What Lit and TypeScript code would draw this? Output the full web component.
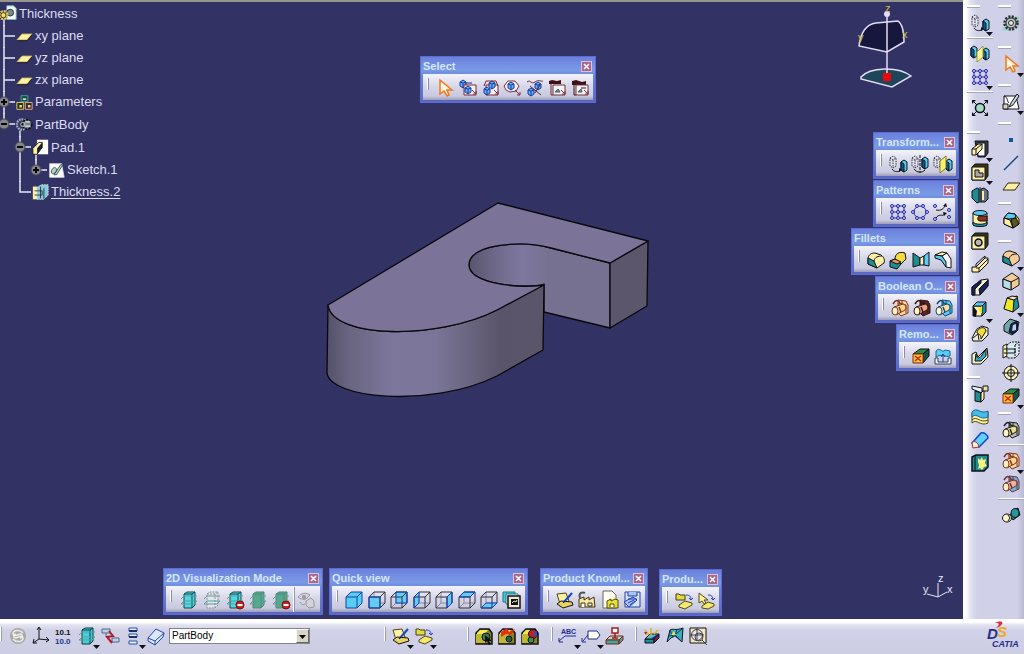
import { LitElement, html, svg, css, nothing } from "lit";
import { customElement, property } from "lit/decorators.js";
import { classMap } from "lit/directives/class-map.js";
import { styleMap } from "lit/directives/style-map.js";

const K = "#101018";
const TEAL = "#1f8c90";
const CYAN = "#58ccf2";
const PALE = "#fff0a4";
const GOLD = "#f4dc3c";
const NAVY = "#1c2c94";

const box = (x: number, y: number, w: number, h: number, d: number, front: string, top: string, side: string, line = K) => svg`
  <path d="M${x} ${y + d}h${w}v${h}h${-w}z" fill=${front} stroke=${line}/>
  <path d="M${x} ${y + d}l${d} ${-d}h${w}l${-d} ${d}z" fill=${top} stroke=${line}/>
  <path d="M${x + w} ${y + d}l${d} ${-d}v${h}l${-d} ${d}z" fill=${side} stroke=${line}/>`;

const cubeFaces: Record<string, string> = {
  front: "M2 7h11v11h-11z",
  back: "M7 2h11v11h-11z",
  left: "M2 7l5-5v11l-5 5z",
  right: "M13 7l5-5v11l-5 5z",
  top: "M2 7l5-5h11l-5 5z",
  bottom: "M2 18l5-5h11l-5 5z",
};
const cube = (face: string) => svg`
  <path d="M7 2v11h11M7 13l-5 5" stroke="#8a8a98" fill="none"/>
  <path d=${cubeFaces[face]} fill=${CYAN} fill-opacity=".9"/>
  <path d="M2 7h11v11h-11zM2 7l5-5h11l-5 5M18 2v11l-5 5" fill="none" stroke="#30303c"/>
  <path d=${cubeFaces[face]} fill="none" stroke="#1040c0"/>`;

const ghost = (x: number) => svg`
  <path d="M${x} 4l3-2 3 2v8l-3 2-3-2zM${x} 4l3 2 3-2M${x + 3} 6v8" fill="#e4e4f0" stroke="#30303c" stroke-dasharray="1.5 1"/>`;
const prism = (x: number, y: number) => svg`
  <path d="M${x} ${y}l3-2 3 2v8l-3 2-3-2z" fill=${CYAN} stroke=${K}/>
  <path d="M${x} ${y}l3 2v8l-3-2z" fill="#105890" stroke=${K}/>`;
const dots = (pts: number[][]) => pts.map(([x, y]) => svg`<circle cx=${x} cy=${y} r="1.5" fill="#c8d0ff" stroke="#2424a0"/>`);
const stop = svg`<circle cx="15" cy="15" r="4" fill="#d02020" stroke="#701010"/><path d="M12.500 15h5" stroke="#fff" stroke-width="2"/>`;
const slab = (fill: string, line: string, dash = "") => svg`
  <path d="M5 4l3-2h8v13l-3 3h-8z" fill=${fill} stroke=${line} stroke-dasharray=${dash}/>
  <path d="M5 4h8l3-2M13 4v14" fill="none" stroke=${line} stroke-dasharray=${dash}/>
  <path d="M2 14l3-3h13l-3 3zM2 9l3-3h13" fill="none" stroke="#58a098"/>`;
const bodies = (a: string, b: string, line: string) => svg`
  <path d="M8 2l8 1 2 4v8l-7 3-3-3z" fill=${b} stroke=${line}/>
  <path d="M9 5l7 2v8M9 5v9M12 3v4" fill="none" stroke=${line}/>
  <path d="M4 9l9-3a3 3.500 0 0 1 2 6l-9 5z" fill=${a} stroke=${line}/>
  <ellipse cx="5" cy="13" rx="3" ry="4" fill="#fff4c8" stroke=${line}/>
  <path d="M3 6c3-5 5-4 7-1M9 9l2 5" fill="none" stroke=${line} stroke-width="1.500"/>`;
const camera = svg`
  <path d="M2 7l4-4h9l3 4v11h-16z" fill="#8a8420" stroke=${K} stroke-width="1.500"/>
  <path d="M3 7l3-3h8l-3 4h-8z" fill="#f8e850"/><path d="M2 8h10v9h-10z" fill="#c0b830"/>`;
const book = svg`
  <path d="M2 4l9-1 3 8-9 3z" fill=${PALE} stroke="#504810"/>
  <path d="M2 14l4-3 11 1 1 3-10 3z" fill="#e8d460" stroke=${K}/>
  <path d="M9 12l8-9" stroke="#1848c0" stroke-width="2"/><path d="M8 13l2-2" stroke=${K}/>`;
const catalog = svg`
  <path d="M2 3h3l1 1h5v5h-9z" fill="#e0dc40" stroke="#403c10"/>
  <path d="M12 4c4 0 5 2 5 4M15 7l2 2 2-2" fill="none" stroke="#2040c0"/>
  <path d="M5 14l6-4 7 2v2l-7 4-6-2z" fill="#f4e870" stroke="#504810"/>`;
const frame = (line: string) => svg`
  <path d="M6 7h12v10h-12z" fill="#f4f0f8" stroke=${line}/>
  <path d="M14 12l4 4M18 13v3h-3" stroke="#803040" fill="none"/>`;
const blueBox = (x: number, y: number) => svg`<path d="M${x} ${y + 2}l3-2 3 2v4l-3 2-3-2zM${x} ${y + 2}l3 1 3-1M${x + 3} ${y + 3}v5" fill="#60b0f4" stroke="#1838a0"/>`;
const gear = svg`<circle cx="10" cy="10" r="6.500" fill="#b4b8b8" stroke="#283030" stroke-width="2.500" stroke-dasharray="2 1.400"/><circle cx="10" cy="10" r="5" fill="#c0ccc8" stroke="#283030"/><circle cx="10" cy="10" r="2.500" fill="#e0e4e4" stroke="#283030"/>`;
const pointer = svg`<path d="M5 2v14l4-3 3 5 2-1-2-5h5z" fill="#fff4e0" stroke="#f07818" stroke-width="1.500"/>`;
const padShape = svg`
  <path d="M5 2h13v12l-3 4h-7z" fill="#383c48" stroke=${K}/><path d="M7 4h8v13h-7z" fill="#fff" stroke=${K}/>
  <path d="M2 10l6-5h4v5l-6 6h-4z" fill=${PALE} stroke=${K}/><path d="M2 10h4v6M6 10l6-5" fill="none" stroke=${K}/>`;
const fillet = (top: string, side: string) => svg`
  <path d="M2 8c1-4 4-5 7-5l6 2c3 2 4 5 3 8l-7 5-9-4z" fill=${top} stroke=${K}/>
  <path d="M2 8l6 3 3 7-9-4z" fill=${side} stroke=${K}/><path d="M8 11c1-4 4-5 8-5" fill="none" stroke=${K}/>`;
const childStub = svg`<path d="M4.700 17v8" stroke="#e8e8f4" stroke-width="1.700"/>`;

const ICONS: Record<string, unknown> = {
  pointer,
  gear: svg`<path d="M1 18l4-11 13-4v9l-6 6z" fill="#90d8c8" opacity=".7"/>${gear}`,
  trapSelect: svg`${blueBox(2, 2)}${frame("#802830")}<path d="M7 5h7" stroke=${NAVY}/>${blueBox(7, 8)}`,
  trapIntersect: svg`${frame("#802830")}${blueBox(4, 9)}${blueBox(9, 3)}<path d="M4 8l2-5h10l2 5" fill="none" stroke="#802830"/>`,
  trapPolygon: svg`<path d="M2 8l4-5h7l4 5-3 5-6 1-4-2z" fill="#f0f0ff" stroke="#803040"/>${blueBox(6, 4)}<path d="M13 12l5 5M18 14v3h-3" fill="none" stroke="#803040"/>`,
  trapPaint: svg`${blueBox(3, 10)}${blueBox(10, 4)}<path d="M2 4c4-3 4 3 8 0s6 0 8-1M5 8l11 9M15 7l-5 8" fill="none" stroke="#602838"/>`,
  trapOutside: svg`<path d="M2 3l3-1 5 1 4-1v4h-12z" fill="#401018"/>${frame("#703038")}<path d="M4 6v11h2" fill="none" stroke="#703038"/><path d="M8 14l3-3 2 3z" fill="#80a890" stroke="#405848"/>`,
  trapOutsideInt: svg`<path d="M2 3l4-1 6 2 4-1v4h-14z" fill="#401018"/>${frame("#703038")}<path d="M4 7v10h2M11 10h5" fill="none" stroke="#401018"/><path d="M8 14l3-3 1 3z" fill="#80a890" stroke="#405848"/>`,
  translate: svg`${ghost(2)}<path d="M4 15c2 3 5 3 8 2" fill="none" stroke=${K}/><path d="M11 14l3 2-3 2z" fill=${K}/>${prism(13, 8)}`,
  symmetry: svg`${ghost(2)}${prism(12, 5)}<path d="M10 1v18" stroke=${K} stroke-dasharray="3 1"/><path d="M4 15c3 4 8 4 11 1" fill="none" stroke=${K}/>`,
  mirrorGhost: svg`${ghost(1)}${prism(13, 7)}<path d="M7 7l6-5v12l-6 5z" fill="#f8f070" stroke="#807820"/>`,
  mirror: svg`${prism(1, 4)}${prism(13, 6)}<path d="M7 8l6-6v11l-6 5z" fill="#f8f498" stroke="#a09830"/>`,
  pattern: svg`<path d="M4 4h12M4 10h12M4 16h12M4 4v12M10 4v12M16 4v12" stroke="#2828a8"/>${dots([[4, 4], [10, 4], [16, 4], [4, 10], [10, 10], [16, 10], [4, 16], [10, 16], [16, 16]])}`,
  circular: svg`<circle cx="10" cy="10" r="6" fill="none" stroke="#2828a8"/>${dots([[7, 4], [13, 4], [3, 10], [17, 10], [7, 16], [13, 16]])}`,
  userPattern: svg`<path d="M4 8c5 1 8-1 9-5M4 16c3-5 6-1 9-4" fill="none" stroke=${K}/><path d="M11 4l3-3 1 4zM11 10l4 1-3 3z" fill=${K}/>${dots([[3, 4], [3, 17], [17, 8], [17, 15]])}`,
  scale: svg`<path d="M3 3l14 14M17 3l-14 14" stroke=${K}/><path d="M2 2h4l-4 4zM18 2h-4l4 4zM2 18h4l-4-4zM18 18h-4l4-4z" fill=${K}/><circle cx="10" cy="10" r="4.500" fill="#a8dcc0" stroke=${K} stroke-width="1.500"/>`,
  filletEdge: fillet(PALE, TEAL),
  filletTan: fillet("#f4cc98", TEAL),
  filletSolid: svg`<path d="M3 8l4-5 7 1 4 5v5l-6 4-9-4z" fill=${GOLD} stroke=${K}/><path d="M7 3l7 1 1 4-7 1-5-1z" fill=${CYAN} stroke=${K}/><path d="M3 8l6 2 3 8-9-4z" fill="#fff0a0" stroke=${K}/><path d="M10 9l5-1 3 6-6 4z" fill="#585820" stroke=${K}/>`,
  filletFace: svg`<path d="M2 11l5-2 6 2v3l-4 5-7-2z" fill=${TEAL} stroke=${K}/><path d="M7 9c0-5 4-8 10-6l1 6-5 5z" fill=${GOLD} stroke=${K}/><path d="M2 11l5-2 6 3-4 2z" fill="#e89858" stroke=${K}/>`,
  filletTri: svg`<path d="M2 3l7 5v7l-7 2z" fill=${TEAL} stroke=${K}/><path d="M9 8l4-2v9l-4 0z" fill="#fff0b0" stroke=${K}/><path d="M13 6l5-4v14l-5-1z" fill=${CYAN} stroke=${K}/>`,
  chamferEdge: svg`<path d="M2 5l7-3 5 1-5 3z" fill=${PALE} stroke=${K}/><path d="M9 6l5-3 4 6v9l-5-1z" fill="#f8f8f8" stroke=${K}/><path d="M2 5l7 1 4 6v5l-5-7-6-2z" fill=${CYAN} stroke=${K}/>`,
  chamfer: svg`<path d="M2 8l9-6 7 5v7l-8 5-8-3z" fill="#f4cc98" stroke=${K}/><path d="M2 8l8 3 8-4M10 11v8" fill="none" stroke=${K}/><path d="M2 8l8 3v8l-8-3z" fill="#b8dce8" stroke=${K}/>`,
  draft: svg`<path d="M3 14l4-10 9-2 2 11-6 5z" fill=${TEAL} stroke=${K}/><path d="M6 4l7 2-1 12-9-3z" fill="#f0e820" stroke=${K}/><path d="M6 4l5-2 6 1-4 3z" fill="#f4e8b0" stroke=${K}/>`,
  shell: svg`<path d="M3 8l6-6 9 3-2 9-5 4-8-4z" fill="#70a8a8" stroke=${K}/><path d="M8 15l2-8 6-3 1 9-5 4z" fill="#182050" stroke=${K}/><path d="M11 14l1-6 3-1v6z" fill="#b8d4e8"/>`,
  thickness: svg`<path d="M2 6l4-2v12l-4 2z" fill=${PALE} stroke=${K}/><path d="M6 5l4-3h8v12l-4 4h-8z" fill="#d8e8f0" stroke=${K} stroke-dasharray="2 1"/><path d="M3 9h11v4h-11" fill="none" stroke=${K}/><path d="M14 5v13M14 5l4-3" stroke=${K} stroke-dasharray="2 1"/>`,
  thread: svg`<circle cx="10" cy="10" r="7" fill="#f8f0b8" stroke=${K}/><circle cx="10" cy="10" r="3.500" fill="none" stroke=${K}/><path d="M10 1v18M1 10h18" stroke=${K}/>`,
  removeFace: svg`<path d="M2 8l7-5h9l-6 5z" fill="#2a9048" stroke=${K}/><path d="M12 8l6-5v7l-6 7z" fill="#105848" stroke=${K}/><path d="M2 8h10v9h-10z" fill="#f0c830" stroke="#902010"/><path d="M4 10l6 5M10 10l-6 5" stroke="#d02020" stroke-width="1.500"/>`,
  replaceFace: svg`<path d="M3 5c4-5 6 3 9-1l5 1v5c-4 2-8-3-14 1z" fill=${CYAN} stroke="#186898"/><path d="M2 12h3v4h10v-4h3v6h-16z" fill="#f0f0f8" stroke="#284060"/><path d="M10 16v-7M8 11l2-3 2 3" stroke="#2040a0" fill="none"/>`,
  assemble: bodies("#ffd890", "#f4d8a0", "#80301c"),
  addBody: bodies("#e8a088", "#502828", "#381410"),
  booleanAdd: bodies("#ffe0a0", CYAN, "#104878"),
  insertBody: bodies("#e8e090", "#b0b8b0", "#202020"),
  trim: bodies("#f0b498", "#68b8e0", "#703038"),
  lump: svg`<path d="M9 11l3-6 5-2 2 7-7 5z" fill=${TEAL} stroke=${K}/><ellipse cx="6" cy="13" rx="4.500" ry="4" fill="#fff8c8" stroke=${K}/><ellipse cx="14" cy="8" rx="4" ry="4.500" fill="#2498a0" stroke=${K}/><path d="M7 10l2 3-2 3" fill="none" stroke=${K}/>`,
  sketch: svg`<path d="M3 4h12l3 13h-15z" fill="#fff" stroke=${K}/><path d="M16 2l-6 9-2 4 4-2 6-9z" fill="#c8e0d8" stroke=${K}/><path d="M2 12h5v5h-5z" fill="#d8d4c0" stroke=${K}/><path d="M3 4c4 1 3 6 5 7" fill="none" stroke=${K}/>`,
  sketchTree: svg`<path d="M2 2h14l3 16h-17z" fill="#fff" stroke="#d8d8e8"/><path d="M4 12c0-6 6-7 6-3s-5 7-6 3M7 15l8-12 2 1-7 11z" fill="#b8d4c8" stroke="#304840"/>`,
  point: svg`<path d="M8 8h4v4h-4z" fill="#105890"/>`,
  line: svg`<path d="M3 17l14-14" stroke="#104878" stroke-width="1.500"/>`,
  plane: svg`<path d="M2 14l5-7h12l-5 7z" fill=${PALE} stroke="#302c10"/>`,
  pad: padShape,
  pocket: svg`<path d="M2 5l3-3h13v12l-3 4h-13z" fill="#383818" stroke=${K}/><path d="M2 5h13v13h-13z" fill=${PALE} stroke=${K}/><path d="M5 8h4v3h4v4h-8z" fill="#a8a8a0" stroke=${K}/>`,
  shaft: svg`<path d="M2 6l5-3 2 1v13l-2 1-5-5z" fill=${TEAL} stroke=${K}/><path d="M11 4l3-1 4 3v8l-3 3h-4z" fill="#607088" stroke=${K}/><path d="M10 2v16" stroke=${K}/><path d="M13 6v9" stroke=${PALE} stroke-width="2"/>`,
  groove: svg`<path d="M3 5v11c2 3 12 3 14 0v-11z" fill=${PALE} stroke=${K}/><ellipse cx="10" cy="5" rx="7" ry="2.500" fill=${CYAN} stroke=${K}/><path d="M17 8h-7c-3 0-3 5 0 5h7z" fill="#903018" stroke=${K}/><path d="M3 14c2 3 12 3 14 0v3c-2 2-12 2-14 0z" fill="#2498a8" stroke=${K}/>`,
  hole: svg`<path d="M2 5l3-3h13v12l-3 4h-13z" fill="#383818" stroke=${K}/><path d="M2 5h13v13h-13z" fill=${PALE} stroke=${K}/><circle cx="8.500" cy="11.500" r="3.500" fill="#b8b8b0" stroke=${K} stroke-width="1.500"/>`,
  rib: svg`<path d="M2 13h4l9-9h3v5l-9 9h-7z" fill=${PALE} stroke=${K}/><path d="M6 13v-3l9-8v2M9 18v-4h-3M9 14l9-9" fill="none" stroke=${K}/>`,
  slot: svg`<path d="M2 10l9-7 7-1v7l-8 9h-8z" fill="#f4f0d0" stroke=${K}/><path d="M2 10l9-7v3l-6 6v6h-3zM9 12l9-9v6l-8 9z" fill="#182458" stroke=${K}/>`,
  stiffener: svg`${box(3, 2, 9, 10, 4, PALE, CYAN, TEAL)}<path d="M3 6l4 5-1 6-3-1z" fill="#101010"/><path d="M8 9l4-3v8z" fill=${GOLD}/>`,
  multiPad: svg`<path d="M2 15l5-9 5-3 6 2v7l-6 6h-9z" fill="#f4f0d0" stroke=${K}/><path d="M7 10c0-5 8-8 9-2l-5 8c0-4-2-5-4-6z" fill=${GOLD} stroke=${K}/><path d="M3 15l5-4 1 6" fill="none" stroke=${K}/>`,
  multiPocket: svg`<path d="M2 8l4-2 2 5 9-9 1 9-7 7h-9z" fill="#f4f0c0" stroke=${K}/><path d="M6 8c0 5 4 5 6 1l4-6v7l-5 5h-6z" fill="#38a8c8" stroke=${K}/>`,
  split: svg`<path d="M2 2l10 2v5l-10-4z" fill="#e8f4fc" stroke=${K}/><path d="M5 7l6 2v9l-6-1z" fill=${TEAL} stroke=${K}/><path d="M11 9l3-3v9l-3 3z" fill=${PALE} stroke=${K}/><path d="M13 2h5v5h-5z" fill="#e8e4a0" stroke=${K}/>`,
  thickSurface: svg`<path d="M2 6c5-6 8 3 16-1v11c-8 4-11-5-16 0z" fill=${PALE} stroke="#504810"/><path d="M2 5c5-6 8 3 16-1v6c-8 4-11-5-16 0z" fill="#48bce8" stroke="#186898"/><path d="M2 13c5-5 8 4 16 0" fill="none" stroke="#504810"/>`,
  closeSurface: svg`<path d="M2 13l9-10c3-1 7 2 7 5l-9 9z" fill="#60d0fc" stroke="#1048c8" stroke-width="1.500"/><path d="M2 13c2-3 6-1 7 4l-6 1z" fill="#fff0e0" stroke="#a03028"/>`,
  sewSurface: svg`<path d="M2 4l4-2h12v12l-4 4h-12z" fill=${TEAL} stroke=${K} stroke-width="1.500"/><path d="M8 5l2 2 2-3 1 3 3-1-1 4 2 3-3 1-2 3-2-2-2 1 1-4-1-3z" fill="#f8f080"/><path d="M5 3v15" stroke=${K}/>`,
  vizShade: slab("#50d8e8", "#104848"),
  vizGhost: slab("#e4e4f0", "#909098", "2 1"),
  vizStop: svg`${slab("#50d8e8", "#104848")}${stop}`,
  vizGreen: slab("#58a890", "#508878"),
  vizGreenStop: svg`${slab("#58a890", "#508878")}${stop}`,
  hide: svg`<path d="M2 7c3-4 8-5 12-2l-4 4c-3 1-6 0-8-2zM10 11l5-3 3 3v6l-5 1-3-3z" fill="#d4d4d8" stroke="#98989c"/><circle cx="8" cy="7" r="2" fill="#98989c"/><path d="M4 12c2 3 3 3 5 2" stroke="#98989c" fill="none"/>`,
  cubeAll: svg`<path d="M2 7l5-5h11v11l-5 5h-11z" fill=${CYAN} stroke="#1040a8"/><path d="M2 7h11v11M13 7l5-5" fill="none" stroke="#1040a8"/>`,
  cubeFront: cube("front"),
  cubeBack: cube("back"),
  cubeLeft: cube("left"),
  cubeRight: cube("right"),
  cubeTop: cube("top"),
  cubeBottom: cube("bottom"),
  namedViews: svg`<path d="M1 2h12v10h-12z" fill="#48c8d8" stroke="#187888"/><path d="M4 4h12v10h-12z" fill="#fff" stroke="#187888"/><path d="M6 6h12v12h-12z" fill="#f0e8c8" stroke=${K} stroke-width="1.500"/><path d="M9 9h7v6h-7z" fill=${K}/><path d="M10 13l2-2 2 1 1-2" fill="none" stroke="#f0e8c8"/>`,
  book,
  catalog,
  factory: svg`<path d="M2 9l5-2v3l5-3v3l5-3 1 10h-16z" fill="#f8e8a0" stroke="#403010"/><path d="M4 17v-4h4v4M11 13h4v3h-4z" fill="#fff" stroke="#403010"/><path d="M3 8c-2-6 3-6 5-5" fill="none" stroke="#485050" stroke-width="2"/>`,
  factoryPage: svg`<path d="M3 1h9l4 4v13h-13z" fill="#fffef0" stroke="#686850"/><path d="M7 11l4-2v2l4-2 3 1v8h-11z" fill="#e8e030" stroke="#504c10"/><path d="M10 17v-3h4v3" fill="#fff" stroke="#504c10"/>`,
  rules: svg`<path d="M3 2h15v15h-15z" fill="#d8e4ff" stroke="#2040b0"/><path d="M6 2v4h9v-4M6 9h9M2 12l9-5 4 3-8 7z" fill="#a8c4f8" stroke="#2040b0"/><path d="M6 13l6-3M8 15l5-4" stroke="#2040b0"/>`,
  catalogPick: svg`<path d="M3 2v10l3-2 2 3 2-1-2-3h4z" fill="#fff0a0" stroke="#504c10"/><path d="M12 4c4 0 5 2 5 5M15 7l2 2 2-2" fill="none" stroke="#2040c0"/><path d="M6 15l6-4 6 2v2l-6 3-6-1z" fill="#f4e870" stroke="#504810"/>`,
  swirl: svg`<circle cx="10" cy="10" r="8" fill="#a8a8a4"/><path d="M15 7c-3-4-10-3-10 1 0 3 5 1 7 0 3 0 3 4 0 4M5 13c3 4 10 3 10-1 0-3-5-1-7 0-3 0-3-4 0-4" fill="none" stroke="#ececea" stroke-width="1.500"/>`,
  axis: svg`<path d="M8 13v-11M8 13l10 1M8 13l-6 4M6 4l2-3 2 3M15 11l3 3-3 2M3 13l-1 4 4 0" fill="none" stroke=${K}/>`,
  tolerance: svg`<text x="1" y="9" class="glyph" fill=${K}>10.1</text><text x="1" y="18" class="glyph" fill="#183890">10.0</text>`,
  shade: slab("#40d0e0", "#103838"),
  filter: svg`<path d="M2 3h8v4h-8z" fill="#b8d0e8" stroke="#506888"/><path d="M6 7v3M12 12h7v4h-7z" fill="#b8d0e8" stroke="#506888"/><path d="M9 5l4 5-6 1 5 6" fill="none" stroke="#b01828" stroke-width="2"/>`,
  layers: svg`<path d="M6 2h8v3h-8zM6 8h8v3h-8zM6 15h8v3h-8z" fill="#e8f0ff" stroke="#2850a0"/><path d="M6 5h8M6 11h8" stroke="#183070" stroke-width="2"/>`,
  bodyPad: svg`<path d="M2 12l8-9 8 4-1 4-8 8-7-4z" fill="#dce8ff" stroke="#2048a8"/><path d="M2 12l7 3 9-8M9 15v4" fill="none" stroke="#2048a8"/>`,
  cameraPick: svg`${camera}<circle cx="12" cy="11" r="4" fill="#407850" stroke=${K}/><path d="M11 9v8l2-2 2 4 2-1-2-3h3z" fill=${K}/>`,
  cameraEdit: svg`${camera}<path d="M4 6l6-4 2 4 6-3-4 6-5-1-5 3z" fill="#e03018"/><circle cx="12" cy="13" r="3" fill="#206838" stroke=${K}/>`,
  cameraColor: svg`${camera}<circle cx="13" cy="8" r="4.500" fill="#c02028" stroke=${K}/><path d="M13 8l4-3v6z" fill="#2850c0"/><circle cx="11" cy="14" r="3" fill="#389048" stroke=${K}/>`,
  textNote: svg`<text x="3" y="8" class="glyph small" fill=${NAVY}>ABC</text><path d="M18 10h-11l-6 5M1 12v4h4" fill="none" stroke=${NAVY}/>`,
  flagNote: svg`<path d="M7 5h9l3 4-3 4h-9z" fill="#fffef0" stroke=${NAVY}/><path d="M7 9l-5 6M1 12v4h4" fill="none" stroke=${NAVY}/>`,
  annotation: svg`<path d="M2 14l4-4h13l-4 4z" fill="#a8e0c8" stroke="#802018"/><path d="M2 14h13v4h-13zM15 14l4-4v4l-4 4z" fill="#40a898" stroke="#802018"/><path d="M8 2h6v5h-6zM11 7v5M8 12h6" fill="#fff" stroke="#a02020" stroke-width="1.500"/>`,
  draftAnalysis: svg`${box(3, 8, 9, 4, 5, "#2090a0", "#58c0c0", "#802030")}<path d="M3 4l4 5M9 2v7M16 4l-4 4" stroke="#e0b020" stroke-width="1.500"/><path d="M2 6l3 0-1 3z" fill="#c02020"/><path d="M10 13l6-4" stroke="#182878" stroke-width="2"/>`,
  curvature: svg`<path d="M2 16l3-12c3-2 5 1 13-2l-1 14-6-6c-4 0-6 3-9 6z" fill="#38b0b8" stroke=${K}/><path d="M5 4l3 8M12 3l-2 7 7 6M4 10l7-2 6-5" fill="none" stroke="#183878"/><path d="M6 9l3-4 2 4z" fill="#e8e040"/>`,
  tap: svg`<path d="M2 2h16v15h-16z" fill="#f4e8c0" stroke=${K}/><circle cx="9" cy="9" r="5.500" fill="#e8e4e8" stroke="#404048"/><circle cx="11" cy="11" r="4" fill="none" stroke="#404048"/><path d="M9 2v12M2 9h14M14 14l5 5" stroke="#404048"/>`,
  partDoc: svg`${childStub}<path d="M8 1h8l3 3v13h-11z" fill="#f4fffc" stroke="#80b8b8"/><circle cx="12" cy="9" r="4" fill="#78888c" stroke="#202828"/><circle cx="4" cy="12" r="4.500" fill="none" stroke="#e8cc60" stroke-width="3" stroke-dasharray="2.500 1"/><circle cx="4" cy="12" r="3" fill="#f8e070" stroke="#383010"/>`,
  treePlane: svg`<path d="M1 14l6-7h12l-6 7z" fill=${PALE} stroke="#b8a850"/><path d="M1 15h12l6-7" fill="none" stroke="#101820"/>`,
  parameters: svg`<path d="M6 2h8v7h-8z" fill="#104848" stroke="#40b8a8"/><path d="M1 10h8v8h-8z" fill="#303010" stroke="#e8e060"/><path d="M11 10h8v8h-8z" fill="#402820" stroke="#f0b8a0"/><path d="M8 5h4v2h-4zM4 13h3v3h-3zM14 13h3v3h-3z" fill="#d8d8a0"/>`,
  partBody: svg`${childStub}<circle cx="7" cy="10" r="6" fill="#383858" stroke="#a8b4c8" stroke-width="2.500" stroke-dasharray="2 1"/><circle cx="13" cy="10" r="5.500" fill="#788088" stroke="#101418" stroke-width="2" stroke-dasharray="3 1"/><path d="M11 7h6M11 12h6" stroke="#e0e4ec" stroke-width="1.500"/><circle cx="8" cy="10" r="2.500" fill="none" stroke="#c8d0dc"/>`,
  padTree: svg`${childStub}<path d="M6 1h13v17h-14z" fill="#fff"/><path d="M1 11l7-7h4v6l-6 8h-5z" fill=${PALE} stroke=${K}/><path d="M6 11l6-7v6l-6 8z" fill="#181c28"/>`,
  thickTree: svg`<path d="M1 3h5v15h-5z" fill=${PALE}/><path d="M6 4l5-3h8v12l-5 5h-8z" fill="#88c8d8" stroke="#e8f0f4" stroke-dasharray="2 1"/><path d="M3 8h9v5h-9M14 5v13M10 3v14" fill="none" stroke="#203040"/>`,
};

type Tool = { icon: string; label: string; menu?: boolean } | "line";
const t = (icon: string, label: string, menu = false): Tool => ({ icon, label, menu });

@customElement("tool-icon")
class ToolIcon extends LitElement {
  @property() name = "";
  static styles = css`
    :host { display: block; width: 20px; height: 20px; }
    .art { display: block; width: 100%; height: 100%; overflow: visible; }
    .glyph { font: bold 8px "Liberation Sans", Arial, sans-serif; }
    .small { font-size: 7px; }
  `;
  render() {
    return html`<svg class="art" viewBox="0 0 20 20" fill="none" aria-hidden="true">${ICONS[this.name]}</svg>`;
  }
}

@customElement("tool-button")
class ToolButton extends LitElement {
  @property() icon = "";
  @property() label = "";
  @property({ type: Boolean }) menu = false;
  static styles = css`
    :host { display: block; }
    .button {
      position: relative; display: grid; place-items: center; width: 22px; height: 22px;
      margin: 0 auto; padding: 0; border: 0; background: none;
    }
    .arrow { position: absolute; right: -2px; bottom: -2px; width: 7px; height: 4px; }
  `;
  render() {
    return html`<button class="button" type="button" aria-label=${this.label} title=${this.label}>
      <tool-icon name=${this.icon}></tool-icon>
      ${this.menu ? html`<svg class="arrow" viewBox="0 0 7 4" aria-hidden="true"><path d="M0 0h7L3.500 4z" fill="#101018"/></svg>` : nothing}
    </button>`;
  }
}

const toolButton = (tool: Tool) =>
  tool === "line"
    ? html`<span class="rule" role="separator"></span>`
    : html`<tool-button class="tool" icon=${tool.icon} label=${tool.label} ?menu=${tool.menu}></tool-button>`;

@customElement("tool-window")
class ToolWindow extends LitElement {
  @property() heading = "";
  @property({ attribute: false }) tools: Tool[] = [];
  static styles = css`
    :host { display: block; }
    .window {
      box-sizing: border-box; padding: 2px 3px 3px; border-radius: 1px;
      background: linear-gradient(#6a7edc, #7a9ae6 30%, #6c86dc 42%, #5866c4);
      box-shadow: inset 0 0 0 1px #5c6cd0;
      font-family: "Liberation Sans", Arial, sans-serif;
    }
    .bar { display: flex; align-items: center; justify-content: space-between; height: 16px; }
    .title { margin: 0; font-size: 11px; line-height: 16px; font-weight: bold; color: #d4e6fc; white-space: nowrap; }
    .close { display: grid; place-items: center; width: 11px; height: 11px; margin-right: 1px; padding: 0; border: 1px solid #e0c0dc; background: #a8688c; }
    .cross { display: block; width: 7px; height: 7px; }
    .body {
      display: flex; align-items: center; height: 26px; padding: 1px 2px 0 0; box-sizing: border-box;
      background: linear-gradient(#f4f4fc, #d8d8ea 45%, #cacae0 85%, #9c9cb8);
    }
    .grip { flex: none; align-self: flex-start; width: 2px; height: 12px; margin: 3px 5px 0 4px; border-right: 1px solid #8c8ca0; background: #fff; box-sizing: border-box; }
    .tool { flex: 1; }
    .rule { width: 2px; height: 25px; background: #fff; border-right: 1px solid #9494ac; box-sizing: border-box; }
  `;
  render() {
    return html`<section class="window" aria-label=${this.heading}>
      <header class="bar">
        <h2 class="title">${this.heading}</h2>
        <button class="close" type="button" aria-label="Close">
          <svg class="cross" viewBox="0 0 7 7" aria-hidden="true"><path d="M1 1l5 5M6 1l-5 5" stroke="#fff" stroke-width="1.500"/></svg>
        </button>
      </header>
      <div class="body" role="toolbar">
        <span class="grip"></span>
        ${this.tools.map(toolButton)}
      </div>
    </section>`;
  }
}

type Guide = { line: "none" | "through" | "tee" | "end"; node?: "+" | "-" };
type Row = { text: string; icon: string; guides: Guide[]; parent?: boolean; active?: boolean };

const ROWS: Row[] = [
  { text: "Thickness", icon: "partDoc", guides: [], parent: true },
  { text: "xy plane", icon: "treePlane", guides: [{ line: "tee" }] },
  { text: "yz plane", icon: "treePlane", guides: [{ line: "tee" }] },
  { text: "zx plane", icon: "treePlane", guides: [{ line: "tee" }] },
  { text: "Parameters", icon: "parameters", guides: [{ line: "tee", node: "+" }] },
  { text: "PartBody", icon: "partBody", guides: [{ line: "end", node: "-" }], parent: true },
  { text: "Pad.1", icon: "padTree", guides: [{ line: "none" }, { line: "tee", node: "-" }], parent: true },
  { text: "Sketch.1", icon: "sketchTree", guides: [{ line: "none" }, { line: "through" }, { line: "end", node: "+" }] },
  { text: "Thickness.2", icon: "thickTree", guides: [{ line: "none" }, { line: "end" }], active: true },
];

const GUIDE_PATHS = { none: "", through: "M4 0v23", tee: "M4 0v23M4 11h11", end: "M4 0v11h11" };

@customElement("spec-tree")
class SpecTree extends LitElement {
  static styles = css`
    :host { display: block; }
    .tree { margin: 0; padding: 2px 0 0; list-style: none; font: 13px/22px "Liberation Sans", Arial, sans-serif; color: #dcdcf0; }
    .row { display: flex; align-items: center; height: 22px; }
    .parent { height: 23px; }
    .guide { flex: none; align-self: flex-start; width: 16px; height: 23px; overflow: visible; }
    .icon { width: 17px; height: 17px; margin-right: 2px; }
    .active { text-decoration: underline; text-underline-offset: 2px; }
  `;
  render() {
    return html`<ul class="tree" role="tree">
      ${ROWS.map(
        (row) => html`<li class=${classMap({ row: true, parent: !!row.parent })} role="treeitem">
          ${row.guides.map(
            (g) => html`<svg class="guide" viewBox="0 0 16 23" fill="none" aria-hidden="true">
              <path d=${GUIDE_PATHS[g.line]} stroke="#e8e8f4" stroke-width="1.500"/>
              ${g.node
                ? svg`<circle cx="4" cy="11" r="5" fill="#85858c" stroke="#4c4c58"/>
                    <path d=${g.node === "+" ? "M1 11h6M4 8v6" : "M1 11h6"} stroke="#08080c" stroke-width="2"/>`
                : nothing}
            </svg>`
          )}
          <tool-icon class="icon" name=${row.icon}></tool-icon>
          <span class=${classMap({ active: !!row.active })}>${row.text}</span>
        </li>`
      )}
    </ul>`;
  }
}

type Place = { left?: number; right?: number; top?: number; bottom?: number; width: number };
const WINDOWS: { heading: string; place: Place; tools: Tool[] }[] = [
  {
    heading: "Select", place: { left: 420, top: 56, width: 176 },
    tools: [t("pointer", "Select"), t("trapSelect", "Rectangle selection trap"), t("trapIntersect", "Intersecting trap"), t("trapPolygon", "Polygon trap"), t("trapPaint", "Paint stroke selection"), t("trapOutside", "Outside trap"), t("trapOutsideInt", "Intersecting outside trap")],
  },
  {
    heading: "Transform...", place: { right: 4, top: 132, width: 86 },
    tools: [t("translate", "Translation"), t("symmetry", "Symmetry"), t("mirrorGhost", "Mirror")],
  },
  {
    heading: "Patterns", place: { right: 5, top: 180, width: 85 },
    tools: [t("pattern", "Rectangular pattern"), t("circular", "Circular pattern"), t("userPattern", "User pattern")],
  },
  {
    heading: "Fillets", place: { right: 4, top: 228, width: 108 },
    tools: [t("filletEdge", "Edge fillet"), t("filletFace", "Face-face fillet"), t("filletTri", "Tritangent fillet"), t("chamferEdge", "Chamfer")],
  },
  {
    heading: "Boolean O...", place: { right: 3, top: 276, width: 85 },
    tools: [t("assemble", "Assemble"), t("addBody", "Remove"), t("booleanAdd", "Add")],
  },
  {
    heading: "Remo...", place: { right: 4, top: 324, width: 63 },
    tools: [t("removeFace", "Remove face"), t("replaceFace", "Replace face")],
  },
  {
    heading: "2D Visualization Mode", place: { left: 163, bottom: 4, width: 160 },
    tools: [t("vizShade", "Standard"), t("vizGhost", "Low intensity"), t("vizStop", "Unpickable"), t("vizGreen", "Background"), t("vizGreenStop", "Unpickable background"), "line", t("hide", "Hide background")],
  },
  {
    heading: "Quick view", place: { left: 329, bottom: 4, width: 199 },
    tools: [t("cubeAll", "Isometric view"), t("cubeFront", "Front view"), t("cubeBack", "Back view"), t("cubeLeft", "Left view"), t("cubeRight", "Right view"), t("cubeTop", "Top view"), t("cubeBottom", "Bottom view"), t("namedViews", "Named views")],
  },
  {
    heading: "Product Knowl...", place: { left: 540, bottom: 4, width: 108 },
    tools: [t("book", "Catalog"), t("factory", "Resources"), t("factoryPage", "Resource page"), t("rules", "Rules")],
  },
  {
    heading: "Produ...", place: { left: 659, bottom: 3, width: 63 },
    tools: [t("catalog", "Instantiate from catalog"), t("catalogPick", "Instantiate from selection")],
  },
];

type Dock = { tools: Tool[]; space?: "near" | "far" };
const DOCKS: Dock[][] = [
  [
    { tools: [t("translate", "Translation", true), "line", t("mirror", "Mirror"), t("pattern", "Rectangular pattern", true), "line", t("scale", "Scaling")] },
    {
      space: "far",
      tools: [t("pad", "Pad", true), t("pocket", "Pocket", true), t("shaft", "Shaft"), t("groove", "Groove"), t("hole", "Hole"), t("rib", "Rib"), t("slot", "Slot"), t("stiffener", "Stiffener", true), t("multiPad", "Multi-sections solid"), t("multiPocket", "Removed multi-sections solid")],
    },
    { space: "near", tools: [t("split", "Split"), t("thickSurface", "Thick surface"), t("closeSurface", "Close surface"), t("sewSurface", "Sew surface")] },
  ],
  [
    { tools: [t("gear", "Part design")] },
    { space: "far", tools: [t("pointer", "Select", true)] },
    { space: "near", tools: [t("sketch", "Sketcher", true)] },
    { space: "near", tools: [t("point", "Point"), t("line", "Line"), t("plane", "Plane")] },
    { tools: [t("filletSolid", "Drafted filleted pad")] },
    {
      space: "near",
      tools: [t("filletTan", "Edge fillet", true), t("chamfer", "Chamfer"), t("draft", "Draft angle", true), t("shell", "Shell"), t("thickness", "Thickness"), t("thread", "Thread/Tap"), t("removeFace", "Remove face", true)],
    },
    { tools: [t("insertBody", "Insert body"), "line", t("assemble", "Assemble", true), t("trim", "Union trim"), "line", t("lump", "Remove lump")] },
  ],
];

const STATUS_LEFT: Tool[] = [t("swirl", "Update all"), t("axis", "Axis system"), t("tolerance", "Mean dimensions"), t("shade", "Create datum", true), t("filter", "Catalog filter"), t("layers", "Layers", true), t("bodyPad", "Current body")];
const STATUS_GROUPS: { space: string; tools: Tool[] }[] = [
  { space: "wide", tools: [t("book", "Catalog browser", true), t("catalog", "Instantiate", true)] },
  { space: "medium", tools: [t("cameraPick", "Apply material"), t("cameraEdit", "Capture"), t("cameraColor", "Render")] },
  { space: "small", tools: [t("textNote", "Text with leader", true), t("flagNote", "Flag note with leader", true), t("annotation", "3D annotation")] },
  { space: "small", tools: [t("draftAnalysis", "Draft analysis"), t("curvature", "Curvature analysis"), t("tap", "Tap/Thread analysis")] },
];

@customElement("app-root")
class AppRoot extends LitElement {
  static styles = css`
    :host { display: block; font-family: "Liberation Sans", Arial, sans-serif; }
    .app { display: grid; grid-template: 1fr auto / minmax(0, 1fr) auto; height: 100vh; background: #cfcfe6; }
    .viewport { position: relative; overflow: hidden; background: #333264; box-sizing: border-box; border-top: 2px solid #96968c; }
    .model { position: absolute; inset: 0; width: 100%; height: 100%; }
    .compass { position: absolute; top: 0; right: 48px; width: 60px; height: 90px; }
    .triad { position: absolute; right: 6px; bottom: 16px; width: 36px; height: 28px; overflow: visible; }
    .label { font: 11px "Liberation Sans", Arial, sans-serif; }
    .overlay { position: absolute; top: -2px; left: 0; }
    .floating { position: absolute; }
    .docks {
      display: flex; gap: 5px; padding: 1px 0 0 4px; min-height: 0;
      background: linear-gradient(90deg, #fff 0, #fff 3px, #e4e4f2 7px, #d0d0e8 14px, #d0d0e8 54px, #b8b8d0);
    }
    .column { display: flex; flex-direction: column; gap: 1px; width: 26px; }
    .dock { display: flex; flex-direction: column; gap: 1px; }
    .near { margin-top: 4px; }
    .far { margin-top: 7px; }
    .dock .grip { width: 13px; height: 3px; margin: 4px 0 3px; box-sizing: border-box; background: #fff; border-bottom: 1px solid #a4a4b8; }
    .dock .rule { height: 2px; margin: 2px 0 3px; box-sizing: border-box; background: #fff; border-bottom: 1px solid #a8a8bc; }
    .status {
      grid-column: 1 / -1; display: flex; align-items: center; height: 35px; box-sizing: border-box;
      padding: 0 4px 2px 0; background: linear-gradient(#fff 0, #fff 3px, #e2e2f0 6px, #d0d0e6 12px, #cdcde4);
    }
    .group { display: flex; align-items: center; gap: 1px; }
    .group .grip { width: 2px; height: 14px; margin: 0 3px 4px 4px; box-sizing: border-box; background: #fff; border-right: 1px solid #9c9cb0; }
    .first .grip { margin: 0 4px 4px 0; }
    .small { margin-left: 6px; }
    .medium { margin-left: 28px; }
    .wide { margin-left: 70px; }
    .picker { display: grid; margin-left: 2px; }
    .select, .picker-arrow { grid-area: 1 / 1; }
    .select {
      appearance: none; width: 141px; height: 16px; margin: 0; padding: 0 16px 0 2px; box-sizing: border-box;
      border: 1px solid #84848c; border-radius: 0; background: #fff; color: #000;
      font: 10px/14px "Liberation Sans", Arial, sans-serif;
    }
    .picker-arrow { justify-self: end; align-self: center; width: 13px; height: 14px; margin-right: 1px; background: #d8d4c8; border: 1px solid; border-color: #f8f8f4 #686860 #686860 #f8f8f4; box-sizing: border-box; pointer-events: none; }
    .logo { width: 36px; height: 32px; margin-left: auto; overflow: visible; }
    .brand { font: italic bold 9px "Liberation Sans", Arial, sans-serif; }
    .mark { font: italic bold 15px "Liberation Sans", Arial, sans-serif; }
  `;

  private model() {
    return html`<svg class="model" viewBox="0 2 963 617" preserveAspectRatio="xMidYMid meet" role="img" aria-label="Part model">
      <defs>
        <linearGradient id="outer" x1="327" x2="544" y1="0" y2="0" gradientUnits="userSpaceOnUse">
          <stop offset="0" stop-color="#56516a"/><stop offset=".1" stop-color="#69647f"/><stop offset=".3" stop-color="#7d779c"/>
          <stop offset=".5" stop-color="#7b7599"/><stop offset=".7" stop-color="#656079"/><stop offset=".8" stop-color="#59546a"/><stop offset="1" stop-color="#5b556c"/>
        </linearGradient>
        <linearGradient id="inner" x1="468" x2="610" y1="0" y2="0" gradientUnits="userSpaceOnUse">
          <stop offset="0" stop-color="#57526c"/><stop offset=".15" stop-color="#6a6584"/><stop offset=".38" stop-color="#7e78a0"/>
          <stop offset=".56" stop-color="#777191"/><stop offset="1" stop-color="#777191"/>
        </linearGradient>
      </defs>
      <g stroke="#08080c" stroke-width="1.300" stroke-linejoin="round">
        <path d="M551 248C520 240 469 244 469 265C469 282 512 289 544 285V312L610 328V263Z" fill="url(#inner)"/>
        <path d="M610 263L648 241L647 306L610 328Z" fill="#5c566d"/>
        <path d="M328 305C333 339 438 340 497 310L544 284L543 350L497 376C430 409 327 398 327 372Z" fill="url(#outer)"/>
        <path d="M328 305L498 203L648 241L610 263L551 248C520 240 469 244 469 265C469 282 512 289 544 285L497 310C438 340 333 339 328 305Z" fill="#7b7398"/>
      </g>
    </svg>`;
  }

  private compass() {
    return html`<svg class="compass" viewBox="855 2 60 90" fill="none" role="img" aria-label="Compass">
      <path d="M859 46C861 30 868 24 876 23L898 21Q904 25 904 42L887 52Z" fill="#17173e" stroke="#e4dcf4" stroke-width="1.500"/>
      <path d="M861 77C870 67 898 66 911 76L892 87L861 79Z" fill="#1e465a" stroke="#e4dcf4" stroke-width="1.500"/>
      <path d="M887 14V77" stroke="#e4dcf4" stroke-width="1.500"/>
      <circle cx="887" cy="14" r="3" fill="#e4dcfc"/>
      <path d="M883 73h8v8h-8z" fill="#f00808"/>
      <g class="label" fill="#c8c050"><text x="885" y="12">z</text><text x="858" y="41">y</text><text x="902" y="38">x</text></g>
    </svg>`;
  }

  private triad() {
    return html`<svg class="triad" viewBox="0 0 36 28" role="img" aria-label="Axis directions">
      <path d="M17 22V8M17 22L6 19M17 22L26 17" fill="none" stroke="#e8e8f4"/>
      <g class="label" fill="#e8e8f4"><text x="17" y="7">z</text><text x="2" y="18">y</text><text x="26" y="18">x</text></g>
    </svg>`;
  }

  render() {
    return html`<div class="app">
      <main class="viewport">
        ${this.model()} ${this.compass()} ${this.triad()}
        <spec-tree class="overlay"></spec-tree>
        ${WINDOWS.map(({ heading, place, tools }) => {
          const { top, ...rest } = place;
          const px = Object.fromEntries(Object.entries(rest).map(([k, v]) => [k, `${v}px`]));
          return html`<tool-window
            class="floating"
            .heading=${heading}
            .tools=${tools}
            style=${styleMap(top === undefined ? px : { ...px, top: `${top - 2}px` })}
          ></tool-window>`;
        })}
      </main>
      <aside class="docks">
        ${DOCKS.map(
          (column) => html`<div class="column">
            ${column.map(
              (dock) => html`<div class=${`dock ${dock.space ?? ""}`} role="toolbar">
                <span class="grip"></span>${dock.tools.map(toolButton)}
              </div>`
            )}
          </div>`
        )}
      </aside>
      <footer class="status">
        <div class="group first" role="toolbar"><span class="grip"></span>${STATUS_LEFT.map(toolButton)}</div>
        <div class="picker">
          <select class="select" aria-label="Current body"><option>PartBody</option></select>
          <svg class="picker-arrow" viewBox="0 0 11 12" aria-hidden="true"><path d="M2 5h7L5.500 9z" fill="#000"/></svg>
        </div>
        ${STATUS_GROUPS.map(
          (g) => html`<div class=${`group ${g.space}`} role="toolbar"><span class="grip"></span>${g.tools.map(toolButton)}</div>`
        )}
        <svg class="logo" viewBox="0 0 36 32" role="img" aria-label="CATIA">
          <path d="M11 3c6-3 11-1 4 4l-3 1c3-3 5-5-1-5z" fill="#d83040"/>
          <text class="mark" x="3" y="19" fill="#28308c">D</text>
          <text class="mark" x="13" y="17" fill="#f0a828">S</text>
          <text class="brand" x="8" y="27" fill="#28308c">CATIA</text>
        </svg>
      </footer>
    </div>`;
  }
}
